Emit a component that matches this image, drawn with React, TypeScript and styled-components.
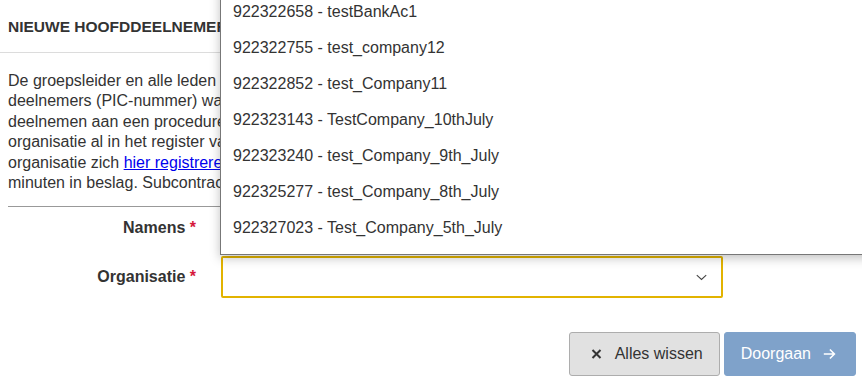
import styled, { createGlobalStyle } from 'styled-components'

const GlobalStyle = createGlobalStyle`
  html, body {
    margin: 0;
    padding: 0;
    background: #fff;
    overflow: hidden;
  }
  body {
    font-family: 'Liberation Sans', Arial, sans-serif;
    color: #333;
  }
`

const organisations = [
  '922322561 - test_company13',
  '922322658 - testBankAc1',
  '922322755 - test_company12',
  '922322852 - test_Company11',
  '922323143 - TestCompany_10thJuly',
  '922323240 - test_Company_9th_July',
  '922325277 - test_Company_8th_July',
  '922327023 - Test_Company_5th_July'
]

export default function App () {
  return (
    <>
      <GlobalStyle />
      <Page>
        <Header>
          <Title>Nieuwe hoofddeelnemer toevoegen</Title>
        </Header>
        <Body>
          <Intro>
            De groepsleider en alle leden van de groep moeten als hoofddeelnemer worden toegevoegd.
            <br />
            deelnemers (PIC-nummer) waarmee zij in het deelnemersregister bekend zijn. Alle organisaties
            <br />
            deelnemen aan een procedure moeten vooraf geregistreerd zijn. Staat uw
            <br />
            organisatie al in het register van de Europese Commissie, gebruik dan die gegevens.
            <br />
            organisatie zich <Link href='#'>hier registreren</Link>. De registratie neemt ongeveer 10 tot 15
            <br />
            minuten in beslag. Subcontractanten hoeven niet geregistreerd te worden.
          </Intro>
          <Divider />
          <Form>
            <FormRow>
              <Label>
                Namens <Required>*</Required>
              </Label>
              <Field />
            </FormRow>
            <FormRow>
              <Label>
                Organisatie <Required>*</Required>
              </Label>
              <Field>
                <Select>
                  <Chevron viewBox='0 0 14 8'>
                    <polyline points='1,1 7,6.5 13,1' />
                  </Chevron>
                </Select>
                <Dropdown>
                  {organisations.map(o => (
                    <Option key={o}>{o}</Option>
                  ))}
                </Dropdown>
              </Field>
            </FormRow>
          </Form>
          <Actions>
            <Button variant='secondary'>
              <ButtonIcon viewBox='0 0 12 12'>
                <path d='M2 2 L10 10 M10 2 L2 10' />
              </ButtonIcon>
              Alles wissen
            </Button>
            <Button variant='primary'>
              Doorgaan
              <ButtonIcon viewBox='0 0 16 14'>
                <path d='M1 7 H14 M8.5 1.5 L14 7 L8.5 12.5' />
              </ButtonIcon>
            </Button>
          </Actions>
        </Body>
      </Page>
    </>
  )
}

const Page = styled.div`
  width: 862px;
  height: 377px;
  position: relative;
  overflow: hidden;
`

const Header = styled.header`
  height: 53px;
  display: flex;
  align-items: center;
  padding: 0 8px;
  border-bottom: 1px solid #dcdcdc;
  box-sizing: border-box;
`

const Title = styled.h1`
  margin: 0;
  font-size: 15.5px;
  font-weight: 700;
  text-transform: uppercase;
  color: #333;
  white-space: nowrap;
  padding-top: 1px;
`

const Body = styled.div`
  padding: 0 8px;
`

const Intro = styled.p`
  margin: 18px 0 0;
  font-size: 16px;
  line-height: 20.4px;
  white-space: nowrap;
`

const Link = styled.a`
  color: #0000ee;
  text-decoration: underline;
`

const Divider = styled.hr`
  margin: 13px 0 0;
  border: 0;
  border-top: 1px solid #999;
`

const Form = styled.div`
  display: flex;
  flex-direction: column;
  gap: 7px;
`

const FormRow = styled.div`
  display: grid;
  grid-template-columns: 188px 502px;
  column-gap: 25px;
  height: 42px;
  align-items: center;
`

const Label = styled.label`
  text-align: right;
  font-size: 16px;
  font-weight: 700;
  color: #333;
`

const Required = styled.span`
  color: #d6193b;
`

const Field = styled.div`
  position: relative;
  height: 42px;
`

const Select = styled.div`
  height: 42px;
  box-sizing: border-box;
  border: 2px solid #e2b300;
  border-radius: 2px;
  background: #fff;
  display: flex;
  align-items: center;
  justify-content: flex-end;
  padding-right: 14px;
`

const Chevron = styled.svg`
  width: 11px;
  height: 7px;
  fill: none;
  stroke: #444;
  stroke-width: 1.4;
`

const Dropdown = styled.ul`
  position: absolute;
  left: -1px;
  bottom: calc(100% + 1px);
  width: 720px;
  margin: 0;
  padding: 0 0 8px;
  list-style: none;
  background: #fff;
  border: 1px solid #777;
  box-shadow: 0 3px 10px rgba(0, 0, 0, 0.25);
  z-index: 10;
`

const Option = styled.li`
  height: 36px;
  line-height: 36px;
  padding-left: 12px;
  font-size: 16px;
  color: #333;
  white-space: nowrap;
`

const Actions = styled.div`
  display: flex;
  justify-content: flex-end;
  gap: 4px;
  margin-top: 34px;
  margin-right: -2px;
`

const Button = styled.button<{ variant: 'primary' | 'secondary' }>`
  height: 44px;
  display: flex;
  align-items: center;
  font-family: inherit;
  font-size: 16px;
  border-radius: 3px;
  box-sizing: border-box;
  white-space: nowrap;
  cursor: pointer;
  ${p =>
    p.variant === 'primary'
      ? `
    background: #7fa2ca;
    border: 1px solid #7fa2ca;
    color: #fff;
    padding: 0 19px 0 16px;
    gap: 12px;
  `
      : `
    background: #e1e1e1;
    border: 1px solid #adadad;
    color: #333;
    padding: 0 16px 0 20px;
    gap: 12px;
  `}
`

const ButtonIcon = styled.svg`
  width: 13px;
  height: 12px;
  fill: none;
  stroke: currentColor;
  stroke-width: 2;
  flex-shrink: 0;
`
